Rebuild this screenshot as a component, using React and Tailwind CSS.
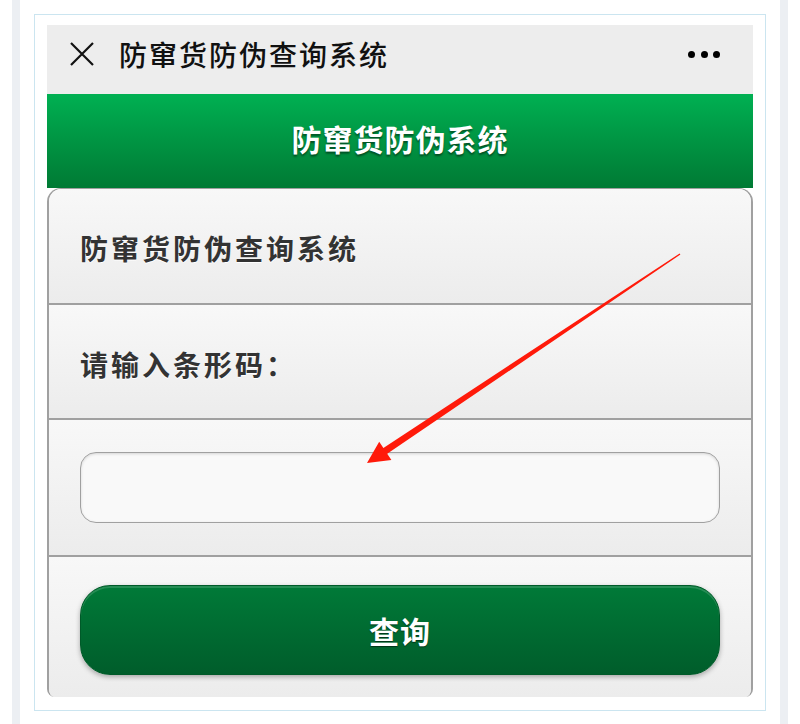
import { useState } from "react";

const cjk = { fontFamily: '"Noto Sans CJK SC", "Noto Sans", sans-serif' };

function TopBar() {
    return (
        <div className="h-[69px] bg-[#ededed] flex items-center pb-[11px] pl-[23px] pr-[33px]">
            <svg width="24" height="24" viewBox="0 0 24 24" className="shrink-0">
                <path d="M1 1 L23 23 M23 1 L1 23" stroke="#111" strokeWidth="2.2" fill="none" />
            </svg>
            <span className="ml-[25px] text-[28px] tracking-[2px] font-medium text-[#111] leading-none">防窜货防伪查询系统</span>
            <div className="ml-auto flex gap-[5.5px]">
                <span className="w-[7px] h-[7px] rounded-full bg-black" />
                <span className="w-[7px] h-[7px] rounded-full bg-black" />
                <span className="w-[7px] h-[7px] rounded-full bg-black" />
            </div>
        </div>
    );
}

function Arrow() {
    // red annotation arrow drawn over the form
    return (
        <svg className="absolute left-0 top-0 pointer-events-none" width="800" height="724">
            <polygon
                points="679.6,253.5 383.4,447.9 379.2,441.7 367,463 391.4,459.9 387.2,453.7 680.4,254.5"
                fill="#ff1a0a"
            />
        </svg>
    );
}

export default function App() {
    const [code, setCode] = useState("");

    return (
        <div className="relative w-[800px] h-[724px] bg-white flex" style={cjk}>
            <div className="ml-[12px] w-[8px] bg-[#eceff3]" />
            <div className="ml-[14px] mt-[14px] w-[732px] h-[697px] border border-[#cbe5f0] pt-[10px] px-[12px]">
                <div className="w-[706px] flex flex-col">
                    <TopBar />
                    <div className="h-[94px] bg-gradient-to-b from-[#00b052] to-[#007a34] flex items-center justify-center pb-[6px]">
                        <span className="text-white font-bold text-[30px] tracking-[1px] [text-shadow:0_2px_2px_rgba(0,0,0,0.45)]">防窜货防伪系统</span>
                    </div>
                    <div className="border-x-2 border-t border-[#a0a0a0] rounded-t-[14px] rounded-b-[8px] overflow-hidden">
                        <div className="h-[114px] bg-gradient-to-b from-[#f8f8f8] to-[#ececec] flex items-center px-[31px] pt-[4px]">
                            <span className="text-[28px] tracking-[3px] font-bold text-[#333] [text-shadow:0_1px_0_#fff]">防窜货防伪查询系统</span>
                        </div>
                        <div className="h-[115px] border-t-2 border-[#a0a0a0] bg-gradient-to-b from-[#f8f8f8] to-[#ececec] flex items-center px-[31px] pt-[4px]">
                            <span className="text-[28px] tracking-[3px] font-bold text-[#333] [text-shadow:0_1px_0_#fff]">请输入条形码：</span>
                        </div>
                        <div className="h-[137px] border-t-2 border-[#a0a0a0] bg-gradient-to-b from-[#f8f8f8] to-[#ececec] pt-[32px] px-[31px]">
                            <input
                                value={code}
                                onChange={(e) => setCode(e.target.value)}
                                className="w-full h-[71px] rounded-[16px] border border-[#a0a0a0] bg-[#f9f9f9] shadow-[inset_0_1px_3px_rgba(0,0,0,0.15)] outline-none px-4 text-[26px]"
                            />
                        </div>
                        <div className="h-[142px] border-t-2 border-[#a0a0a0] bg-gradient-to-b from-[#f8f8f8] to-[#ececec] pt-[28px] px-[31px]">
                            <button className="w-full h-[90px] rounded-[30px] border border-[#005a29] bg-gradient-to-b from-[#007a38] to-[#005d2b] shadow-[0_2px_5px_rgba(0,0,0,0.3),inset_0_2px_0_rgba(255,255,255,0.15)] text-white font-bold text-[30px] tracking-[1px] [text-shadow:0_1px_1px_rgba(0,0,0,0.5)]">
                                查询
                            </button>
                        </div>
                    </div>
                </div>
            </div>
            <div className="ml-[14px] w-[8px] bg-[#eceff3]" />
            <Arrow />
        </div>
    );
}
